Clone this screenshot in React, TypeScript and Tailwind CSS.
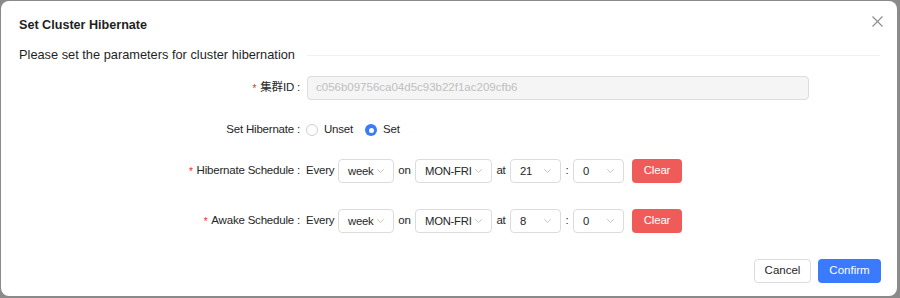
import React from 'react';

const font = { fontFamily: '"Liberation Sans", "Noto Sans CJK SC", sans-serif' };

const Chevron: React.FC = () => (
  <svg width="7" height="4" viewBox="0 0 7 4" fill="none" className="shrink-0">
    <path d="M0.3 0.3L3.5 3.5L6.7 0.3" stroke="#bfbfbf" strokeWidth="0.9" />
  </svg>
);

interface SelectProps {
  value: string;
  width: string;
}

const Select: React.FC<SelectProps> = ({ value, width }) => (
  <div
    className={`${width} shrink-0 h-[24px] flex items-center justify-between pl-[9px] pr-[9px] border border-[#dcdcdc] rounded-[4px] bg-white text-[11.3px] tracking-[-0.25px] text-[#262626] whitespace-nowrap`}
  >
    <span>{value}</span>
    <Chevron />
  </div>
);

const Label: React.FC<{ text: string; required?: boolean }> = ({ text, required }) => (
  <div className="w-[287px] shrink-0 flex items-center justify-end pr-[6px] text-[11.5px] tracking-[-0.2px] text-[#262626] whitespace-nowrap">
    {required && <span className="text-[#f5222d] mr-[4px] text-[10px]">*</span>}
    <span>{text}</span>
    <span className="ml-[3px]">:</span>
  </div>
);

interface ScheduleProps {
  label: string;
  hour: string;
}

const ScheduleRow: React.FC<ScheduleProps> = ({ label, hour }) => (
  <div className="flex items-center h-[24px]">
    <Label text={label} required />
    <div className="flex items-center text-[11.5px] tracking-[-0.2px] text-[#262626] whitespace-nowrap">
      <span className="w-[32px]">Every</span>
      <Select value="week" width="w-[56px]" />
      <span className="w-[21px] text-center">on</span>
      <Select value="MON-FRI" width="w-[77px]" />
      <span className="w-[18px] text-center">at</span>
      <Select value={hour} width="w-[51px]" />
      <span className="w-[12px] text-center">:</span>
      <Select value="0" width="w-[51px]" />
      <button className="ml-[8px] w-[50px] h-[24px] rounded-[4px] bg-[#ef5b58] text-white text-[11.5px]">
        Clear
      </button>
    </div>
  </div>
);

const App: React.FC = () => {
  return (
    <div className="w-[900px] h-[298px] bg-[#8a8a8a] pt-px pl-px pr-[3px] pb-[2px]" style={font}>
      <div className="w-full h-full bg-white rounded-[8px] relative flex flex-col">
        <button className="absolute right-[14px] top-[14px] w-[12px] h-[12px] flex items-center justify-center">
          <svg width="11" height="11" viewBox="0 0 11 11">
            <path d="M0.5 0.5L10.5 10.5M10.5 0.5L0.5 10.5" stroke="#8c8c8c" strokeWidth="1.1" />
          </svg>
        </button>
        <div className="pl-[18px] pt-[15px] h-[44px]">
          <h2 className="text-[12.6px] font-bold text-[#1f1f1f]">Set Cluster Hibernate</h2>
        </div>
        <div className="flex items-center pl-[18px] pr-[17px] h-[20px]">
          <span className="text-[12.8px] text-[#1f1f1f] whitespace-nowrap">
            Please set the parameters for cluster hibernation
          </span>
          <div className="flex-1 ml-[12px] h-px bg-[#f0f0f0]" />
        </div>
        <div className="pl-[18px] mt-[11px] flex flex-col">
          <div className="flex items-center h-[24px]">
            <Label text="集群ID" required />
            <div className="ml-px w-[502px] h-[24px] flex items-center px-[8px] border border-[#dcdcdc] rounded-[4px] bg-[#f5f5f5] text-[11.5px] text-[#bfbfbf]">
              c056b09756ca04d5c93b22f1ac209cfb6
            </div>
          </div>
          <div className="flex items-center h-[24px] mt-[18px]">
            <Label text="Set Hibernate" />
            <div className="flex items-center text-[11.5px] tracking-[-0.2px] text-[#262626]">
              <span className="w-[12px] h-[12px] rounded-full border border-[#d0d0d0] bg-white mr-[6px]" />
              <span className="mr-[12px]">Unset</span>
              <span className="w-[12px] h-[12px] rounded-full bg-[#3a7bfd] flex items-center justify-center mr-[6px]">
                <span className="w-[5px] h-[5px] rounded-full bg-white" />
              </span>
              <span>Set</span>
            </div>
          </div>
          <div className="mt-[17px]">
            <ScheduleRow label="Hibernate Schedule" hour="21" />
          </div>
          <div className="mt-[26px]">
            <ScheduleRow label="Awake Schedule" hour="8" />
          </div>
        </div>
        <div className="mt-auto mb-[13px] pr-[16px] flex justify-end gap-[7px]">
          <button className="w-[57px] h-[24px] rounded-[4px] border border-[#dcdcdc] bg-white text-[11.5px] text-[#262626]">
            Cancel
          </button>
          <button className="w-[63px] h-[24px] rounded-[4px] bg-[#3a7bfd] text-white text-[11.5px]">
            Confirm
          </button>
        </div>
      </div>
    </div>
  );
};

export default App;
